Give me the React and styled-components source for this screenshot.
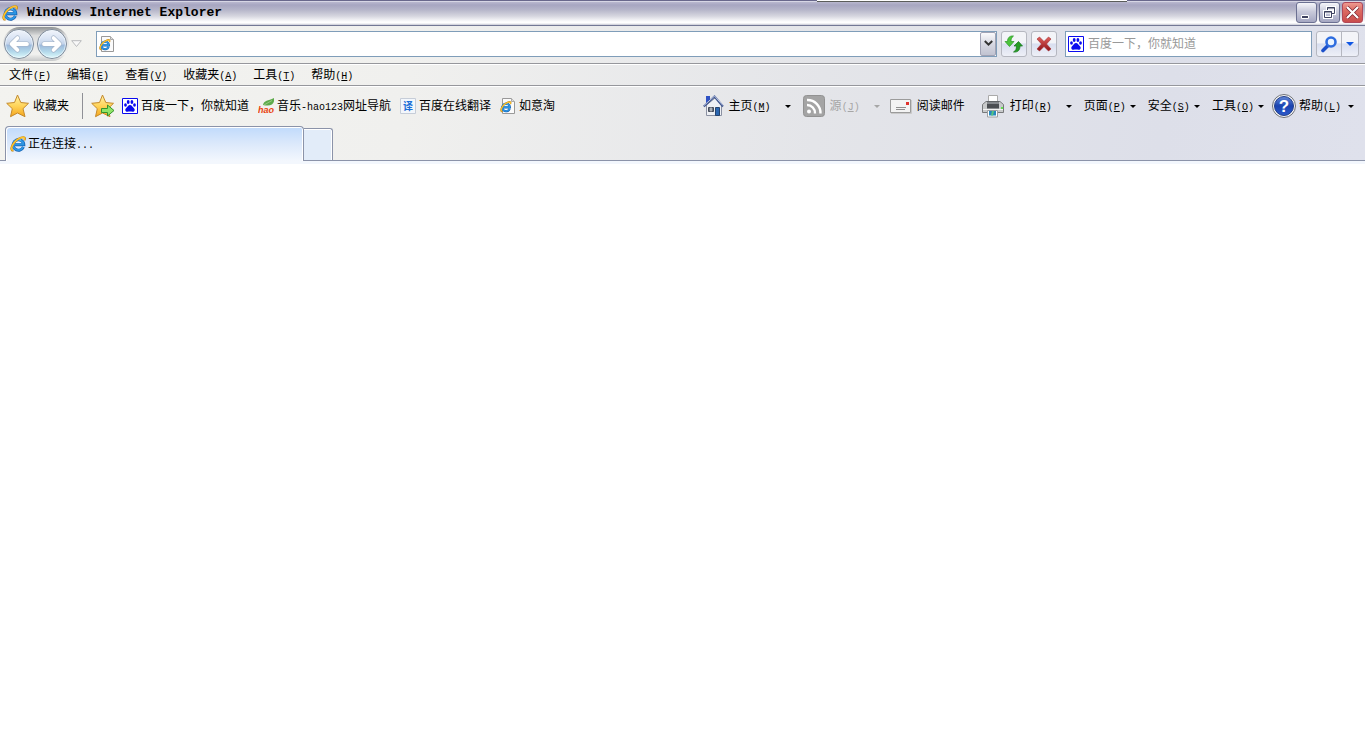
import React from 'react';
import styled, { createGlobalStyle } from 'styled-components';

const GlobalStyle = createGlobalStyle`
  * {
    box-sizing: border-box;
  }
  body {
    margin: 0;
    background: #fff;
    color: #000;
    font-family: "Liberation Sans", "Noto Sans CJK SC", sans-serif;
    font-size: 12px;
    line-height: 16px;
  }
  button, input {
    font: inherit;
    color: inherit;
  }
  svg {
    display: block;
    flex: none;
  }
`;

const Window = styled.div`
  display: flex;
  flex-direction: column;
  min-height: 100vh;
`;

const TitleBar = styled.header`
  position: relative;
  display: flex;
  align-items: center;
  height: 26px;
  padding: 0 2px;
  border-top: 1px solid #69688c;
  border-bottom: 1px solid #737895;
  background: linear-gradient(#f4f4fa 0, #b9b8cf 1px, #a7a6c1 4px, #b6b6ca 9px, #d5d5df 15px, #fff 21px, #fff 22px, #c6c8d3 24px);
`;

const Title = styled.h1`
  flex: 1;
  margin: 0 0 0 9px;
  font-family: "Liberation Mono", monospace;
  font-size: 13px;
  font-weight: bold;
`;

// edge of the panel docked above the window
const DockedEdge = styled.div`
  position: absolute;
  top: -1px;
  right: 238px;
  width: 310px;
  height: 2px;
  background: #fff;
  border-bottom: 1px solid #5b5d5b;
`;

const Caption = styled.div`
  display: flex;
  align-self: flex-start;
  gap: 2px;
  padding-top: 1px;
`;

const CaptionButton = styled.button`
  display: flex;
  align-items: center;
  justify-content: center;
  width: 21px;
  height: 21px;
  padding: 0;
  border: 1px solid ${({ $close }) => ($close ? '#b04858' : '#6b7092')};
  border-radius: 3px;
  background: ${({ $close }) =>
    $close
      ? 'linear-gradient(#ee9a90, #dc6a62 40%, #c94c4c)'
      : 'linear-gradient(#f5f5fa, #c9cadb 45%, #a5a7c2)'};
`;

const Chrome = styled.div`
  background: linear-gradient(98deg, #f3f3ef 0%, #f0f0ee 30%, #e4e5e9 60%, #dddfe9 85%, #dfe1ec 100%);
`;

const NavBar = styled.div`
  display: flex;
  align-items: center;
  height: 38px;
  padding: 0 6px 2px 3px;
  border-bottom: 1px solid #96979c;
`;

const Travel = styled.div`
  display: flex;
  align-items: center;
  justify-content: space-between;
  width: 66px;
  height: 34px;
  padding-right: 1px;
  border-radius: 17px;
  background: linear-gradient(#8f9294, #dcdddd 25%, #f2f2f0 80%, #c6c8c9);
`;

const PlainButton = styled.button`
  display: flex;
  align-items: center;
  padding: 0;
  border: 0;
  background: none;
`;

const HistoryButton = styled(PlainButton)`
  margin: 0 14px 0 2px;
`;

const Field = styled.div`
  display: flex;
  align-items: center;
  height: 26px;
  padding-left: 2px;
  border: 1px solid #7f9db9;
  background: #fff;
`;

const AddressField = styled(Field)`
  flex: 1;
`;

const SearchField = styled(Field)`
  width: 247px;
  margin: 0 4px 0 8px;
`;

const TextInput = styled.input`
  flex: 1;
  min-width: 0;
  height: 20px;
  padding: 0 4px;
  border: 0;
  outline: 0;
  background: none;
  &::placeholder {
    color: #999;
    opacity: 1;
  }
`;

const DropButton = styled.button`
  display: flex;
  align-items: center;
  justify-content: center;
  width: 16px;
  height: 24px;
  padding: 0;
  border: 1px solid #a1a3b5;
  border-radius: 2px;
  background: linear-gradient(#fafafc, #d7d8e2 50%, #c1c3d1);
`;

const ToolButton = styled.button`
  display: flex;
  align-items: center;
  justify-content: center;
  width: 26px;
  height: 26px;
  margin-left: 4px;
  padding: 0;
  border: 1px solid #b5b7c0;
  border-radius: 3px;
  background: linear-gradient(#f3f4f8 45%, #d8deef 50%, #eef0f7);
`;

const SearchGroup = styled.div`
  display: flex;
  width: 43px;
  height: 26px;
  border: 1px solid #b5b7c0;
  border-radius: 3px;
  background: linear-gradient(#f3f4f8 45%, #d8deef 50%, #eef0f7);
`;

const SearchPart = styled(PlainButton)`
  justify-content: center;
  width: ${({ $narrow }) => ($narrow ? '17px' : '25px')};
  border-left: ${({ $narrow }) => ($narrow ? '1px solid #b5b7c0' : '0')};
`;

const MenuBar = styled.nav`
  display: flex;
  align-items: center;
  gap: 16px;
  height: 22px;
  padding-left: 9px;
  border-top: 1px solid #fff;
  border-bottom: 1px solid #96979c;
`;

const Key = styled.span`
  font-family: "Liberation Mono", monospace;
  font-size: 10px;
  line-height: 1;
`;

const LinksBar = styled.div`
  display: flex;
  align-items: center;
  justify-content: space-between;
  height: 39px;
  padding: 0 11px 0 6px;
  border-top: 1px solid #fff;
`;

const Group = styled.div`
  display: flex;
  align-items: center;
`;

const Favorite = styled.a`
  display: flex;
  align-items: center;
  gap: 3px;
  margin-right: 9px;
  color: #000;
  text-decoration: none;
  white-space: nowrap;
`;

const Divider = styled.div`
  width: 1px;
  height: 26px;
  margin: 0 8px 0 13px;
  background: #8f9096;
`;

const Command = styled(PlainButton)`
  gap: ${({ $gap }) => $gap || 5}px;
  margin-right: ${({ $after = 12 }) => $after}px;
  color: ${({ disabled }) => (disabled ? '#a6a6a6' : '#000')};
  white-space: nowrap;
`;

const Arrow = styled.span`
  width: 0;
  margin-left: ${({ $space = -1 }) => $space}px;
  border: 3px solid transparent;
  border-top-color: currentColor;
  border-bottom: 0;
`;

const TabStrip = styled.div`
  display: flex;
  align-items: flex-end;
  height: 36px;
  padding-left: 5px;
  border-bottom: 1px solid #8b93a9;
`;

const Tab = styled.button`
  display: flex;
  align-items: center;
  gap: 2px;
  width: 299px;
  height: 35px;
  margin-bottom: -1px;
  padding: 0 4px;
  border: 1px solid #8b93a9;
  border-bottom: 0;
  border-radius: 4px 4px 0 0;
  box-shadow: inset 1px 1px #fff, inset -1px 0 #fff;
  background: linear-gradient(#c0dafb, #dce9fb 50%, #f3f7fd);
`;

const NewTab = styled.button`
  width: 29px;
  height: 32px;
  padding: 0;
  border: 1px solid #8b93a9;
  border-left: 0;
  border-bottom: 0;
  border-radius: 0 3px 0 0;
  box-shadow: inset 0 1px #fff, inset -1px 0 #fff;
  background: #e2ecf9;
`;

const Page = styled.main`
  flex: 1;
  border-top: 3px solid #f3f7fd;
  background: #fff;
`;

const LogoShape = () => (
  <>
    <path d="M13.400 11A5.300 5.300 0 1 1 13.800 8.800H5" fill="none" stroke="#1560b0" strokeWidth="3" />
    <path d="M13.100 10.900A5.200 5.200 0 1 1 13.500 8.600H5" fill="none" stroke="#2c96e4" strokeWidth="2" />
    <path d="M6 6.900A3.200 3 0 0 1 11 6.900z" fill="#e8f5fd" />
    <path d="M3.500 8A5.200 5.200 0 0 1 11 4.100" fill="none" stroke="#7fd2f8" strokeWidth="1" />
    <path d="M3.500 14.800C-1.800 14.500 3.500 4.500 11 1.600C14.300.5 15.800 1.500 14.400 4.400" fill="none" stroke="#c08418" strokeWidth="2" />
    <path d="M3 14.400C-1 13.500 4 4.300 11.200 1.700C14.100.7 15 1.600 14.300 3.800" fill="none" stroke="#ffc62b" strokeWidth="1.400" />
  </>
);

const ExplorerIcon = () => (
  <svg width="16" height="16" viewBox="0 0 16 16">
    <LogoShape />
  </svg>
);

const PageIcon = () => (
  <svg width="16" height="16" viewBox="0 0 16 16">
    <path d="M2.500.5h9l3 3v12h-12z" fill="#fbfbfb" stroke="#999" />
    <path d="M11.500.5v3h3" fill="#ddd" stroke="#aaa" />
    <g transform="translate(0 3) scale(.72)">
      <LogoShape />
    </g>
  </svg>
);

const TravelIcon = ({ forward }) => (
  <svg width="32" height="32" viewBox="0 0 32 32">
    <defs>
      <linearGradient id={forward ? 'fwd' : 'back'} x1="0" y1="0" x2="0" y2="1">
        <stop offset="0" stopColor="#f2f5fb" />
        <stop offset=".3" stopColor="#dbe5f4" />
        <stop offset=".5" stopColor="#c3d3ea" />
        <stop offset=".54" stopColor="#9db9db" />
        <stop offset=".75" stopColor="#b1d6e9" />
        <stop offset="1" stopColor="#dffcfd" />
      </linearGradient>
    </defs>
    <circle cx="16" cy="16" r="14.500" fill={`url(#${forward ? 'fwd' : 'back'})`} stroke="#7f8a99" />
    <circle cx="16" cy="16" r="13.500" fill="none" stroke="#eef7fc" strokeOpacity=".7" />
    <g transform={forward ? 'rotate(180 16 16)' : undefined} fill="none" strokeLinecap="round" strokeLinejoin="round">
      <path d="M24 16H9M14.500 10L8.500 16l6 6" stroke="#a3b3c8" strokeWidth="5" />
      <path d="M24 16H9M14.500 10L8.500 16l6 6" stroke="#fff" strokeWidth="3.800" />
    </g>
  </svg>
);

const PawIcon = () => (
  <svg width="16" height="16" viewBox="0 0 16 16">
    <path d="M.5.5h15v15H.5z" fill="#fff" stroke="#0a0aef" />
    <g fill="#0a0aef">
      <ellipse cx="3.500" cy="7" rx="1.400" ry="1.800" />
      <ellipse cx="6.200" cy="4" rx="1.400" ry="1.900" />
      <ellipse cx="9.900" cy="4" rx="1.400" ry="1.900" />
      <ellipse cx="12.500" cy="7" rx="1.400" ry="1.800" />
      <path d="M8 7c2 0 2 1.500 3.500 2.700c2.200 1.800 1 4.300-1 4.100c-1.500-.3-3.500-.3-5 0c-2 .2-3.200-2.300-1-4.100C6 8.500 6 7 8 7z" />
    </g>
  </svg>
);

const StarIcon = ({ add }) => (
  <svg width="24" height="24" viewBox="0 0 24 24">
    <defs>
      <linearGradient id="gold" x1="0" y1="0" x2="0" y2="1">
        <stop offset="0" stopColor="#fff3a8" />
        <stop offset=".5" stopColor="#ffd45a" />
        <stop offset="1" stopColor="#f5a61d" />
      </linearGradient>
    </defs>
    <path
      d="M11.500 1L14.800 8.500L22.500 9.300L17 14.700L19 22.700L11.500 19L4.500 22.700L6.300 14.700L.7 9.300L8.500 8.500Z"
      fill="url(#gold)"
      stroke="#c58a2c"
      strokeLinejoin="round"
    />
    {add && <path d="M10.500 14.500h6v-3.500l6.500 5.500l-6.500 5.500v-3.500h-6z" fill="#8fe567" stroke="#35922c" strokeLinejoin="round" />}
  </svg>
);

const HaoIcon = () => (
  <svg width="16" height="16" viewBox="0 0 16 16">
    <path d="M5 7C6 2 10 3 16 0C17 6 13 9 5 7Z" fill="#5daa4b" />
    <path d="M6 7L14 2.500" stroke="#a4d191" strokeWidth=".8" />
    <text x="0" y="15" fontFamily="Liberation Sans, sans-serif" fontSize="9" fontWeight="bold" fontStyle="italic" fill="#e9430f">hao</text>
  </svg>
);

const TranslateIcon = () => (
  <svg width="16" height="16" viewBox="0 0 16 16">
    <path d="M.5.5h15v15H.5z" fill="#f3f7fc" stroke="#c6cdd8" />
    <text x="3" y="12" fontFamily="Noto Sans CJK SC, sans-serif" fontSize="10" fontWeight="bold" fill="#1c6fd6">译</text>
  </svg>
);

const RefreshIcon = () => (
  <svg width="20" height="18" viewBox="0 0 20 18">
    <path d="M9.500 1C5.500 .5 3.500 3 3.500 6.500H1L5.500 11.500L10 6.500H7C7 4 7.500 2.500 9.500 1Z" fill="#4cc53c" stroke="#2b9728" strokeWidth=".7" />
    <path d="M9.500 17c4.500.5 6.500-2 6.500-6h2.500L14.500 6.500L10 11h2.500c0 3-.8 4.800-3 6Z" fill="#279c25" stroke="#13751a" strokeWidth=".7" />
  </svg>
);

const StopIcon = () => (
  <svg width="16" height="16" viewBox="0 0 16 16">
    <defs>
      <linearGradient id="stop" x1="0" y1="0" x2="0" y2="1">
        <stop offset="0" stopColor="#e0605c" />
        <stop offset="1" stopColor="#8e1218" />
      </linearGradient>
    </defs>
    <path d="M1 3L3.500 1L8 5.500L12.500 1L15 3L10.500 8L15 13L12.500 15L8 10.500L3.500 15L1 13L5.500 8Z" fill="url(#stop)" stroke="#a3282b" strokeWidth=".6" />
  </svg>
);

const SearchIcon = () => (
  <svg width="18" height="18" viewBox="0 0 18 18">
    <path d="M3 15.500L7.500 11" stroke="#1c50ca" strokeWidth="3.600" strokeLinecap="round" />
    <circle cx="11" cy="7" r="4.500" fill="#eaf4ff" stroke="#2d6cdf" strokeWidth="2.600" />
  </svg>
);

const HomeIcon = () => (
  <svg width="21" height="22" viewBox="0 0 21 22">
    <path d="M3 1h4v7H3z" fill="#2e51c4" />
    <path d="M3.500 10L12 3L18.500 10V20.500H3.500Z" fill="#eef0f4" stroke="#8b91a2" />
    <path d="M.8 11.500L11.500 1.500L20 11.500" fill="none" stroke="#44598f" strokeWidth="2" />
    <path d="M1 10.500L11.500 1L20 10.500" fill="none" stroke="#c7d3ef" strokeWidth=".9" />
    <path d="M5.500 12.500h5v4h-5z" fill="#6d7684" stroke="#444b58" />
    <path d="M8 12.500v4" stroke="#eee" />
    <path d="M12.500 12.500h4v8h-4z" fill="#2a66b0" stroke="#25446f" />
  </svg>
);

const FeedIcon = () => (
  <svg width="22" height="22" viewBox="0 0 22 22">
    <rect x=".5" y=".5" width="21" height="21" rx="3" fill="#a4a4a4" stroke="#929292" />
    <circle cx="6" cy="16.500" r="2" fill="#fff" />
    <path d="M4 10a8 8 0 0 1 8 8.500M4 5a13 13 0 0 1 13.500 13.500" fill="none" stroke="#fff" strokeWidth="2.400" />
  </svg>
);

const MailIcon = () => (
  <svg width="22" height="15" viewBox="0 0 22 15">
    <path d="M.5.5h20v13H.5z" fill="#f3f3f3" stroke="#9b9b9b" />
    <path d="M1 14.500h20.500V1" fill="none" stroke="#c9c9c9" />
    <path d="M6 8.500h10M6 10.500h9" stroke="#909090" />
    <path d="M16 3h3v3h-3z" fill="#e0322c" />
  </svg>
);

const PrinterIcon = () => (
  <svg width="24" height="24" viewBox="0 0 24 24">
    <path d="M7.500 1.500h9v8h-9z" fill="#fff" stroke="#aaa" />
    <path d="M1.500 10.500L5 7.500h14l3.500 3v8h-21z" fill="#c8cacb" stroke="#77797b" />
    <path d="M6 7.500h12v7H6z" fill="#4b4e52" />
    <path d="M6 8h12v2H6z" fill="#85898d" />
    <path d="M2 15.500h20" stroke="#f2f2f2" />
    <path d="M20 13h2v2h-2z" fill="#60de4d" />
    <path d="M6.500 16.500h10v6.500h-10z" fill="#fff" stroke="#9d9fa0" />
    <path d="M8 17h7v4.500H8z" fill="#2787bf" />
    <path d="M11 17h2l-1 4.500h-2z" fill="#57c57c" />
  </svg>
);

const HelpIcon = () => (
  <svg width="24" height="24" viewBox="0 0 24 24">
    <defs>
      <linearGradient id="help" x1="0" y1="0" x2="0" y2="1">
        <stop offset="0" stopColor="#6388d8" />
        <stop offset=".5" stopColor="#1a43b0" />
        <stop offset="1" stopColor="#2e5bcc" />
      </linearGradient>
    </defs>
    <circle cx="12" cy="12" r="11.500" fill="#f4f4f4" stroke="#6f7278" />
    <circle cx="12" cy="12" r="9.500" fill="url(#help)" stroke="#24408b" />
    <text x="12" y="18" textAnchor="middle" fontFamily="Liberation Sans, sans-serif" fontSize="17" fontWeight="bold" fill="#fff">?</text>
  </svg>
);

const Label = ({ text, hotkey }) => (
  <span>
    {text}
    {hotkey && <Key>(<u>{hotkey}</u>)</Key>}
  </span>
);

const menus = [
  ['文件', 'F'],
  ['编辑', 'E'],
  ['查看', 'V'],
  ['收藏夹', 'A'],
  ['工具', 'T'],
  ['帮助', 'H'],
];

const App = () => {
  return (
    <>
      <GlobalStyle />
      <Window>
        <TitleBar>
          <DockedEdge />
          <ExplorerIcon />
          <Title>Windows Internet Explorer</Title>
          <Caption>
            <CaptionButton aria-label="最小化">
              <svg width="15" height="15" viewBox="0 0 15 15">
                <path d="M2.500 10.500h7v3h-7z" fill="#3f4260" stroke="#fff" />
              </svg>
            </CaptionButton>
            <CaptionButton aria-label="还原">
              <svg width="15" height="15" viewBox="0 0 15 15">
                <path d="M5.500 5V2.500h7v6H10M5 3h8M2.500 6.500h7v6h-7zM2 7h8" fill="none" stroke="#fff" strokeWidth="3" />
                <path d="M5.500 5V2.500h7v6H10M5 3h8M2.500 6.500h7v6h-7zM2 7h8" fill="none" stroke="#3f4260" />
              </svg>
            </CaptionButton>
            <CaptionButton $close aria-label="关闭">
              <svg width="17" height="17" viewBox="0 0 17 17">
                <path d="M3 3l11 11M14 3L3 14" stroke="#7b2430" strokeWidth="3.600" />
                <path d="M3 3l11 11M14 3L3 14" stroke="#fff" strokeWidth="2.200" />
              </svg>
            </CaptionButton>
          </Caption>
        </TitleBar>

        <Chrome>
          <NavBar>
            <Travel>
              <PlainButton aria-label="后退"><TravelIcon /></PlainButton>
              <PlainButton aria-label="前进"><TravelIcon forward /></PlainButton>
            </Travel>
            <HistoryButton aria-label="最近浏览的页面">
              <svg width="11" height="8" viewBox="0 0 11 8">
                <path d="M.7.7h9.600L5.500 6.500z" fill="#f8f8f8" stroke="#b9bbbd" />
              </svg>
            </HistoryButton>
            <AddressField>
              <PageIcon />
              <TextInput type="text" aria-label="地址" />
              <DropButton aria-label="显示地址列表">
                <svg width="9" height="7" viewBox="0 0 9 7">
                  <path d="M.8 1l3.700 3.700L8.200 1" fill="none" stroke="#333" strokeWidth="2" />
                </svg>
              </DropButton>
            </AddressField>
            <ToolButton aria-label="刷新"><RefreshIcon /></ToolButton>
            <ToolButton aria-label="停止"><StopIcon /></ToolButton>
            <SearchField>
              <PawIcon />
              <TextInput type="text" aria-label="搜索" placeholder="百度一下，你就知道" />
            </SearchField>
            <SearchGroup>
              <SearchPart aria-label="开始搜索"><SearchIcon /></SearchPart>
              <SearchPart $narrow aria-label="搜索选项">
                <svg width="8" height="4" viewBox="0 0 8 4">
                  <path d="M0 0h8L4 4z" fill="#0f56e4" />
                </svg>
              </SearchPart>
            </SearchGroup>
          </NavBar>

          <MenuBar>
            {menus.map(([text, hotkey]) => (
              <PlainButton key={hotkey}><Label text={text} hotkey={hotkey} /></PlainButton>
            ))}
          </MenuBar>

          <LinksBar>
            <Group>
              <Command $gap={3} $after={0}><StarIcon /><Label text="收藏夹" /></Command>
              <Divider />
              <Command $after={7} aria-label="添加到收藏夹栏"><StarIcon add /></Command>
              <Favorite href="#"><PawIcon />百度一下，你就知道</Favorite>
              <Favorite href="#"><HaoIcon /><span>音乐<Key>-hao123</Key>网址导航</span></Favorite>
              <Favorite href="#"><TranslateIcon />百度在线翻译</Favorite>
              <Favorite href="#"><PageIcon />如意淘</Favorite>
            </Group>
            <Group>
              <Command><HomeIcon /><Label text="主页" hotkey="M" /><Arrow $space={9} /></Command>
              <Command disabled $after={10}><FeedIcon /><Label text="源" hotkey="J" /><Arrow $space={9} /></Command>
              <Command $after={16}><MailIcon /><Label text="阅读邮件" /></Command>
              <Command><PrinterIcon /><Label text="打印" hotkey="R" /><Arrow $space={9} /></Command>
              <Command><Label text="页面" hotkey="P" /><Arrow /></Command>
              <Command><Label text="安全" hotkey="S" /><Arrow /></Command>
              <Command $after={8}><Label text="工具" hotkey="O" /><Arrow /></Command>
              <Command $gap={3} $after={0}><HelpIcon /><Label text="帮助" hotkey="L" /><Arrow $space={4} /></Command>
            </Group>
          </LinksBar>

          <TabStrip>
            <Tab><ExplorerIcon /><span>正在连接<Key>...</Key></span></Tab>
            <NewTab aria-label="新选项卡" />
          </TabStrip>
        </Chrome>
        <Page />
      </Window>
    </>
  );
};

export default App;
